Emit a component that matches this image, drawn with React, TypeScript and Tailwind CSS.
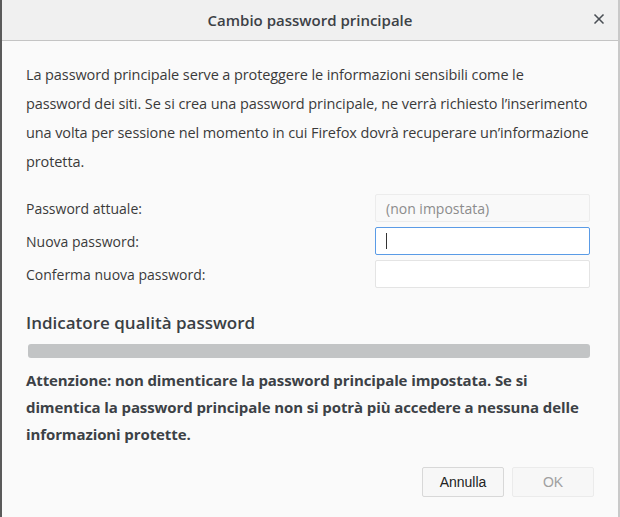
import { X } from 'lucide-react';

const fields = [
    { label: 'Password attuale:', value: '(non impostata)', disabled: true },
    { label: 'Nuova password:', value: '', focused: true },
    { label: 'Conferma nuova password:', value: '' },
];

export default function App() {
    return (
        <div className="w-[620px] h-[517px] flex flex-col bg-[#fafafa] border-l-2 border-l-[#5a5a5a] border-r-2 border-r-[#c9c9c9] text-[#333] overflow-hidden" style={{ fontFamily: '"Open Sans", "Noto Sans", sans-serif' }}>
            {/* Title bar */}
            <div className="h-[41px] shrink-0 flex items-center justify-center relative bg-[#f0f0f0] border-b border-[#c4c4c4]">
                <h1 className="text-[15px] font-semibold text-[#3c4146]">Cambio password principale</h1>
                <button className="absolute right-[11px] top-[11px] text-[#4a4f55]">
                    <X size={16} strokeWidth={2.5} />
                </button>
            </div>

            <div className="flex-1 flex flex-col pl-[24px] pr-[28px] pt-[19px]">
                <p className="text-[14.5px] leading-[29px] text-[#3a3a3a] whitespace-nowrap tracking-[-0.1px]">
                    La password principale serve a proteggere le informazioni sensibili come le
                    <br />
                    password dei siti. Se si crea una password principale, ne verrà richiesto l’inserimento
                    <br />
                    una volta per sessione nel momento in cui Firefox dovrà recuperare un’informazione
                    <br />
                    protetta.
                </p>

                <div className="mt-[18px] flex flex-col gap-[5px]">
                    {fields.map((f) => (
                        <div key={f.label} className="flex items-center justify-between">
                            <span className="text-[14px] text-[#3a3a3a]">{f.label}</span>
                            <div
                                className={`w-[215px] h-[28px] flex items-center px-[10px] border rounded-[2px] ${
                                    f.focused ? 'border-[#5a9be6] bg-white' : f.disabled ? 'bg-[#f9f9f9] border-[#ececec]' : 'bg-white border-[#e4e4e4]'
                                }`}
                            >
                                {f.disabled && <span className="text-[14px] text-[#8c8c8c]">{f.value}</span>}
                                {f.focused && <span className="w-px h-[16px] bg-[#333]" />}
                            </div>
                        </div>
                    ))}
                </div>

                <h2 className="mt-[22px] text-[17px] font-semibold text-[#3a3f44]">Indicatore qualità password</h2>
                <div className="mt-[8px] ml-[2px] h-[14px] rounded-[3px] bg-[#c2c4c5]" />

                <p className="mt-[9px] text-[15px] font-bold leading-[27px] text-[#3c4146] whitespace-nowrap tracking-[-0.1px]">
                    Attenzione: non dimenticare la password principale impostata. Se si
                    <br />
                    dimentica la password principale non si potrà più accedere a nessuna delle
                    <br />
                    informazioni protette.
                </p>

                <div className="mt-auto mb-[20px] -mr-[4px] flex justify-end gap-[8px]">
                    <button className="w-[82px] h-[30px] text-[14px] text-[#222] bg-[#f7f7f7] border border-[#d8d8d8] rounded-[2px]" style={{ fontFamily: '"Liberation Sans", Arial, sans-serif' }}>
                        Annulla
                    </button>
                    <button className="w-[82px] h-[30px] text-[14px] text-[#a0a0a0] bg-[#f7f7f7] border border-[#ebebeb] rounded-[2px]" style={{ fontFamily: '"Liberation Sans", Arial, sans-serif' }}>
                        OK
                    </button>
                </div>
            </div>
        </div>
    );
}
